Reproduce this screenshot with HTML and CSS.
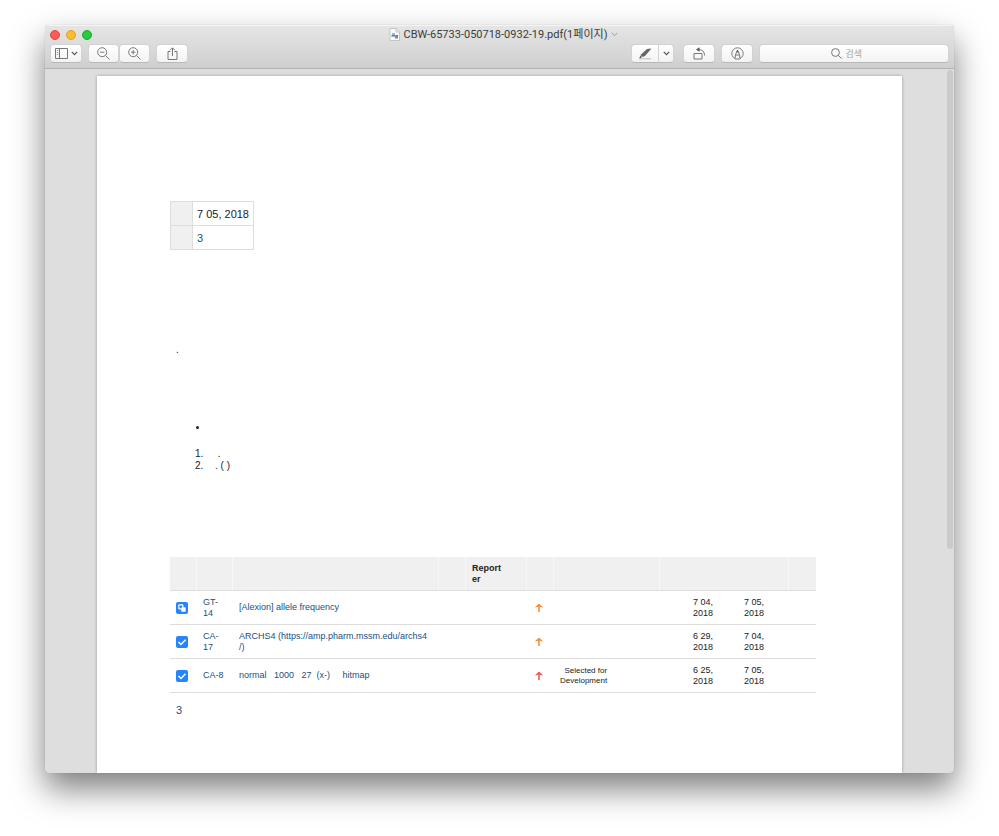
FILE: index.html
```html
<!DOCTYPE html>
<html lang="ko">
<head>
    <meta charset="UTF-8">
    <title>CBW-65733-050718-0932-19.pdf</title>
    <meta name="viewport" content="width=device-width, initial-scale=1.0">
    <link rel="stylesheet" href="styles.css">
</head>
<body>
    <div class="window">
        <header class="window-header">
            <div class="title-row">
                <div class="window-buttons">
                    <button class="window-btn close" aria-label="Close"></button>
                    <button class="window-btn minimize" aria-label="Minimize"></button>
                    <button class="window-btn expand" aria-label="Expand"></button>
                </div>
                <div class="window-title">
                    <svg width="11" height="13" viewBox="0 0 11 13">
                        <path d="M1 .5h6l3.500 3.500v8.500H1z" fill="#fafafa" stroke="#c4c4c4"/>
                        <path d="M7 .5v3.500h3.500" fill="none" stroke="#c4c4c4"/>
                        <path d="M3 5h3v2H3z" fill="#9bb8df"/>
                        <path d="M2.500 7h4v1.500h-4zM7 7h2v1H7z" fill="#3f78c4"/>
                        <path d="M6 8h3v2.500H6z" fill="#888"/>
                    </svg>
                    <span>CBW-65733-050718-0932-19.pdf(1페이지)</span>
                    <svg width="7" height="5" viewBox="0 0 7 5" fill="none" stroke="#999"><path d="M.8 1l2.700 2.700L6.200 1"/></svg>
                </div>
            </div>
            <div class="toolbar">
                <button class="tool-btn" aria-label="View">
                    <svg width="13" height="11" viewBox="0 0 13 11" fill="none" stroke="#777">
                        <path d="M.5 .5h12v10H.5zM4.500 .5v10"/><path d="M1.800 2.500h1.500M1.800 4.500h1.500M1.800 6.500h1.500" stroke-width=".7"/>
                    </svg>
                    <svg width="7" height="5" viewBox="0 0 7 5" fill="none" stroke="#555" stroke-width="1.200"><path d="M.8 .9l2.700 2.700L6.200 .9"/></svg>
                </button>
                <div class="btn-group">
                    <button class="tool-btn" aria-label="Zoom out">
                        <svg width="13" height="13" viewBox="0 0 13 13" fill="none" stroke="#777"><circle cx="5.200" cy="5.200" r="4.500"/><path d="M8.500 8.500l4 4M3 5.200h4.400"/></svg>
                    </button>
                    <button class="tool-btn" aria-label="Zoom in">
                        <svg width="13" height="13" viewBox="0 0 13 13" fill="none" stroke="#777"><circle cx="5.200" cy="5.200" r="4.500"/><path d="M8.500 8.500l4 4M3 5.200h4.400M5.200 3v4.400"/></svg>
                    </button>
                </div>
                <button class="tool-btn" aria-label="Share">
                    <svg width="11" height="13" viewBox="0 0 11 13" fill="none" stroke="#777"><path d="M3.500 4.500h-2.500v8h9v-8H7.500M5.500 9V1M3 3.300L5.500 .8 8 3.300"/></svg>
                </button>
                <div class="spacer"></div>
                <div class="btn-group markers">
                    <button class="tool-btn marker" aria-label="Highlight">
                        <svg width="13" height="12" viewBox="0 0 13 12"><path d="M1.500 7L8 1l4.500-.5L6 8l-2.500 1z" fill="#666"/><path d="M1.300 7.600l1.800 1.600L.3 10.500z" fill="#555"/><path d="M0 10.800h12" stroke="#bbb"/></svg>
                    </button>
                    <button class="tool-btn arrow" aria-label="Highlight color">
                        <svg width="7" height="5" viewBox="0 0 7 5" fill="none" stroke="#555" stroke-width="1.300"><path d="M.8 .9l2.700 2.700L6.200 .9"/></svg>
                    </button>
                </div>
                <button class="tool-btn" aria-label="Rotate">
                    <svg width="13" height="13" viewBox="0 0 13 13" fill="none" stroke="#777"><path d="M1 6.500h8v5.500H1z"/><path d="M5 2.500c4 0 6.500 2 6.500 6"/><path d="M6.500 .3v4.400L3 2.500z" fill="#555" stroke="none"/></svg>
                </button>
                <button class="tool-btn" aria-label="Markup">
                    <svg width="13" height="13" viewBox="0 0 13 13" fill="none" stroke="#777"><circle cx="6.500" cy="6.500" r="5.700"/><path d="M4 11.500l.5-4 2-4.500 2 4.500.5 4M4.700 8h3.600"/><path d="M6.500 2.500l1.300 3H5.200z" fill="#666" stroke="none"/></svg>
                </button>
                <label class="search">
                    <svg width="11" height="11" viewBox="0 0 11 11" fill="none" stroke="#777"><circle cx="4.500" cy="4.500" r="3.900"/><path d="M7.400 7.400l3.200 3.200"/></svg>
                    <input type="search" placeholder="검색" aria-label="검색">
                </label>
            </div>
        </header>
        <main class="viewer">
            <article class="page">
                <table class="summary">
                    <tr><th></th><td>7 05, 2018</td></tr>
                    <tr><th></th><td><a href="#issues">3</a></td></tr>
                </table>
                <p class="note">.</p>
                <ul class="notes">
                    <li></li>
                </ul>
                <ol class="steps">
                    <li>&nbsp;.</li>
                    <li>. ( )</li>
                </ol>
                <table class="issues" id="issues">
                    <colgroup>
                        <col class="col-icon"><col class="col-key"><col class="col-summary"><col class="col-icon"><col class="col-reporter"><col class="col-icon"><col class="col-status"><col class="col-icon"><col class="col-date"><col class="col-date"><col class="col-icon">
                    </colgroup>
                    <thead>
                        <tr><th></th><th></th><th></th><th></th><th class="reporter">Reporter</th><th></th><th></th><th class="plain"></th><th class="plain"></th><th></th><th class="plain"></th></tr>
                    </thead>
                    <tbody>
                        <tr>
                            <td><svg width="12" height="12" viewBox="0 0 12 12"><rect width="12" height="12" rx="2" fill="#2684ff"/><rect x="2.800" y="2.800" width="4" height="4" rx=".5" fill="none" stroke="#fff" stroke-width="1.200"/><rect x="5.300" y="5.300" width="4.400" height="4.400" rx=".5" fill="#fff"/></svg></td>
                            <td><a href="#">GT-14</a></td>
                            <td class="title"><a href="#">[Alexion] allele frequency</a></td>
                            <td></td>
                            <td></td>
                            <td><svg class="priority" width="8" height="9" viewBox="0 0 8 9" fill="#f79232" stroke="#f79232"><path d="M4 9V2" stroke-width="1.600"/><path d="M.7 4L4 1l3.300 3L4 3z" stroke-linejoin="round"/></svg></td>
                            <td></td>
                            <td></td>
                            <td>7 04, 2018</td>
                            <td>7 05, 2018</td>
                            <td></td>
                        </tr>
                        <tr>
                            <td><svg width="12" height="12" viewBox="0 0 12 12"><rect width="12" height="12" rx="2" fill="#2684ff"/><path d="M2.500 6l2.500 2.500 4.500-4.700" fill="none" stroke="#fff" stroke-width="1.500"/></svg></td>
                            <td><a href="#">CA-17</a></td>
                            <td class="title"><a href="#">ARCHS4 (https://amp.pharm.mssm.edu/archs4<wbr>/)</a></td>
                            <td></td>
                            <td></td>
                            <td><svg class="priority" width="8" height="9" viewBox="0 0 8 9" fill="#f79232" stroke="#f79232"><path d="M4 9V2" stroke-width="1.600"/><path d="M.7 4L4 1l3.300 3L4 3z" stroke-linejoin="round"/></svg></td>
                            <td></td>
                            <td></td>
                            <td>6 29, 2018</td>
                            <td>7 04, 2018</td>
                            <td></td>
                        </tr>
                        <tr>
                            <td><svg width="12" height="12" viewBox="0 0 12 12"><rect width="12" height="12" rx="2" fill="#2684ff"/><path d="M2.500 6l2.500 2.500 4.500-4.700" fill="none" stroke="#fff" stroke-width="1.500"/></svg></td>
                            <td><a href="#">CA-8</a></td>
                            <td class="title"><a class="spaced" href="#">normal   1000   27  (x-)     hitmap</a></td>
                            <td></td>
                            <td></td>
                            <td><svg class="priority" width="8" height="9" viewBox="0 0 8 9" fill="#f15c5c" stroke="#f15c5c"><path d="M4 9V2" stroke-width="1.600"/><path d="M.7 4L4 1l3.300 3L4 3z" stroke-linejoin="round"/></svg></td>
                            <td><span class="status">Selected for<br>Development</span></td>
                            <td></td>
                            <td>6 25, 2018</td>
                            <td>7 05, 2018</td>
                            <td></td>
                        </tr>
                    </tbody>
                </table>
                <a class="total" href="#issues">3</a>
            </article>
            <div class="scrollbar"></div>
        </main>
    </div>
</body>
</html>
```

FILE: styles.css
```css
* {
    box-sizing: border-box;
}

body {
    margin: 0;
    min-height: 100vh;
    padding: 25px 45px 64px;
    display: flex;
    background: white;
    font-family: "Liberation Sans", "Noto Sans CJK KR", sans-serif;
    font-size: 10px;
    line-height: 12px;
    color: #222;
}

a {
    color: #205081;
    text-decoration: none;
}

svg {
    display: block;
    flex: none;
}

.window {
    flex: 1;
    display: flex;
    flex-direction: column;
    border-radius: 4px;
    overflow: hidden;
    background: #dedede;
    box-shadow: 0 0 1px rgba(0, 0, 0, 0.3), 0 16px 32px rgba(0, 0, 0, 0.5);
}

.window-header {
    background: linear-gradient(#e5e5e5, #cfcfcf);
    border-top: 1px solid #f4f4f4;
    border-bottom: 1px solid #b0b0b0;
    padding: 0 5px 5px;
}

.title-row {
    display: grid;
    grid-template-columns: 1fr auto 1fr;
    align-items: center;
    height: 18px;
    padding-bottom: 1px;
}

.window-buttons {
    display: flex;
    gap: 6px;
}

.window-btn {
    width: 10px;
    height: 10px;
    padding: 0;
    border: 1px solid;
    border-radius: 50%;
}

.close {
    background: #fc5b57;
    border-color: #e2463f;
}

.minimize {
    background: #fdbc2e;
    border-color: #e0a023;
}

.expand {
    background: #28c83f;
    border-color: #1aab2c;
}

.window-title {
    display: flex;
    align-items: center;
    gap: 4px;
    padding-left: 8px;
    font-family: Roboto, "Noto Sans CJK KR", sans-serif;
    font-size: 11px;
    color: #3c3c3c;
}

.toolbar {
    display: flex;
    gap: 6px;
}

.btn-group {
    display: flex;
}

.tool-btn,
.search {
    display: flex;
    align-items: center;
    justify-content: center;
    gap: 3px;
    height: 19px;
    padding: 0;
    border: 1px solid #d2d2d2;
    border-bottom-color: #b8b8b8;
    border-radius: 4px;
    background: linear-gradient(#fff, #f3f3f3);
}

.tool-btn {
    width: 32px;
}

.btn-group .tool-btn {
    width: 31px;
}

.markers {
    margin-right: 3px;
}

.btn-group .marker {
    width: 27px;
    border-right: 0;
    border-radius: 4px 0 0 4px;
}

.btn-group .arrow {
    width: 16px;
    border-radius: 0 4px 4px 0;
}

.spacer {
    flex: 1;
}

.search {
    flex: 0 1 190px;
    gap: 4px;
}

.search input {
    width: 32px;
    padding: 0;
    border: 0;
    outline: none;
    background: none;
    font-family: "Noto Sans CJK KR", sans-serif;
    font-size: 9px;
}

.search input::placeholder {
    color: #a6a6a6;
}

.viewer {
    position: relative;
    flex: 1;
    display: flex;
    padding: 7px 52px 0;
}

.page {
    flex: 1;
    padding: 125px 86px 56px 73px;
    background: white;
    box-shadow: 0 0 3px rgba(0, 0, 0, 0.3);
}

.scrollbar {
    position: absolute;
    top: 1px;
    right: 1px;
    width: 6px;
    height: 68%;
    border-radius: 3px;
    background: #cbcbcb;
}

.summary {
    border-collapse: collapse;
    font-size: 11px;
}

.summary th,
.summary td {
    height: 24px;
    padding: 0 4px;
    border: 1px solid #ddd;
}

.summary th {
    width: 22px;
    background: #f0f0f0;
}

.note {
    margin: 94px 0 0 6px;
}

.notes {
    margin: 66px 0 0;
    padding-left: 39px;
}

.steps {
    margin: 14px 0 0;
    padding-left: 36px;
}

.steps li {
    padding-left: 9px;
}

.issues {
    width: 100%;
    margin-top: 85px;
    table-layout: fixed;
    border-spacing: 0;
    font-size: 9px;
    line-height: 11px;
}

.issues th,
.issues td {
    height: 34px;
    padding: 0 6px;
    border-bottom: 1px solid #ddd;
    text-align: left;
    overflow-wrap: break-word;
}

.issues th {
    background: #f0f0f0;
    border-right: 1px solid #f7f7f7;
}

.issues .reporter {
    padding-right: 24px;
}

.issues .plain {
    border-right: 0;
}

.issues .title {
    padding-right: 10px;
}

.issues .priority {
    margin-left: 2px;
}

.col-icon {
    width: 27px;
}

.col-key {
    width: 36px;
}

.col-summary {
    width: auto;
}

.col-reporter {
    width: 61px;
}

.col-status {
    width: 106px;
}

.col-date {
    width: 51px;
}

.spaced {
    white-space: pre;
}

.status {
    display: inline-block;
    font-size: 8px;
    line-height: 10px;
    text-align: right;
}

.total {
    display: inline-block;
    margin: 11px 0 0 6px;
    font-size: 11px;
}
```
